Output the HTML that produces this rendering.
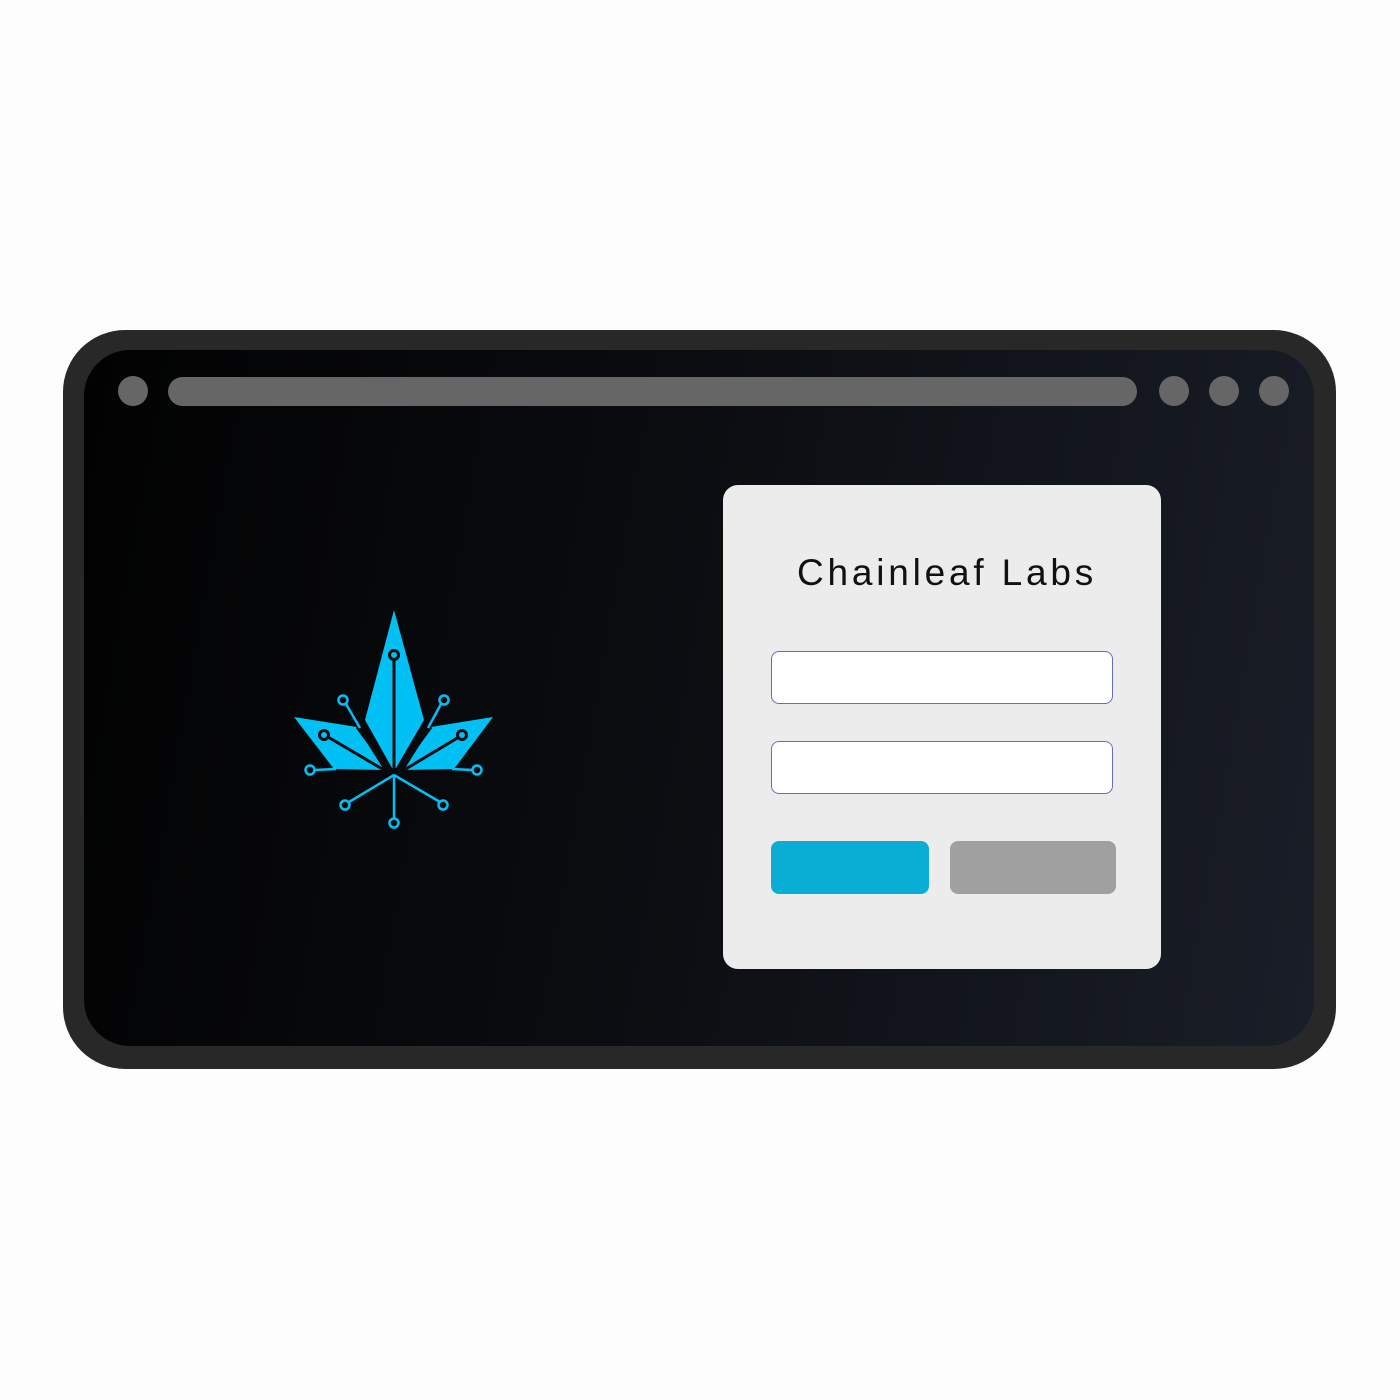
<!DOCTYPE html>
<html><head><style>
html,body{margin:0;padding:0;background:#fdfdfd;width:1400px;height:1400px;overflow:hidden;position:relative;font-family:"Liberation Sans",sans-serif}
.a{position:absolute}
</style></head><body>
<div class="a" style="left:63px;top:330px;width:1273px;height:739px;border-radius:62px;background:#282828"></div>
<div class="a" style="left:84px;top:350px;width:1230px;height:696px;border-radius:46px;background:linear-gradient(100deg,#020202 0%,#0a0c10 45%,#1a1e28 100%)"></div>
<div class="a" style="left:118px;top:376px;width:30px;height:30px;border-radius:50%;background:#666"></div>
<div class="a" style="left:168px;top:377px;width:969px;height:29px;border-radius:15px;background:#666"></div>
<div class="a" style="left:1159px;top:376px;width:30px;height:30px;border-radius:50%;background:#666"></div>
<div class="a" style="left:1209px;top:376px;width:30px;height:30px;border-radius:50%;background:#666"></div>
<div class="a" style="left:1259px;top:376px;width:30px;height:30px;border-radius:50%;background:#666"></div>

<svg class="a" style="left:0;top:0" width="1400" height="1400">
<g fill="#00c0f4">
<polygon points="394,610 424,720 396,768 392,768 365,720"/>
<polygon points="294,717 357,727 384,770 334,769"/>
<polygon points="493,717 431,727 404,770 454,769"/>
</g>
<g stroke="#0a0b0e" stroke-width="3" fill="none">
<line x1="394" y1="659" x2="394" y2="770"/>
<line x1="328" y1="737" x2="384" y2="770"/>
<line x1="459" y1="737" x2="404" y2="770"/>
<line x1="357" y1="727" x2="390" y2="772"/>
<line x1="431" y1="727" x2="398" y2="772"/>
<circle cx="394" cy="655" r="4.5"/>
<circle cx="324" cy="735" r="4.5"/>
<circle cx="462" cy="735" r="4.5"/>
</g>
<g stroke="#00c0f4" stroke-width="2.5" fill="none">
<line x1="346" y1="704" x2="360" y2="728"/>
<line x1="441" y1="704" x2="428" y2="728"/>
<line x1="314" y1="770" x2="336" y2="769"/>
<line x1="473" y1="770" x2="452" y2="769"/>
<line x1="394" y1="775" x2="394" y2="819"/>
<line x1="394" y1="775" x2="349" y2="802"/>
<line x1="394" y1="775" x2="440" y2="802"/>
<circle cx="343" cy="700" r="4.5"/>
<circle cx="444" cy="700" r="4.5"/>
<circle cx="310" cy="770" r="4.5"/>
<circle cx="477" cy="770" r="4.5"/>
<circle cx="345" cy="805" r="4.5"/>
<circle cx="443" cy="805" r="4.5"/>
<circle cx="394" cy="823" r="4.5"/>
</g>
</svg>

<div class="a" style="left:723px;top:485px;width:438px;height:484px;border-radius:15px;background:#ececec"></div>
<div class="a" style="left:723px;top:552px;width:448px;text-align:center;font-size:37px;letter-spacing:3.8px;color:#111">Chainleaf Labs</div>
<div class="a" style="left:771px;top:651px;width:340px;height:51px;border:1px solid #6a6ac0;border-radius:8px;background:#fff"></div>
<div class="a" style="left:771px;top:741px;width:340px;height:51px;border:1px solid #6a6ac0;border-radius:8px;background:#fff"></div>
<div class="a" style="left:771px;top:841px;width:158px;height:53px;border-radius:8px;background:#0aaed4"></div>
<div class="a" style="left:950px;top:841px;width:166px;height:53px;border-radius:8px;background:#a0a0a0"></div>
</body></html>
